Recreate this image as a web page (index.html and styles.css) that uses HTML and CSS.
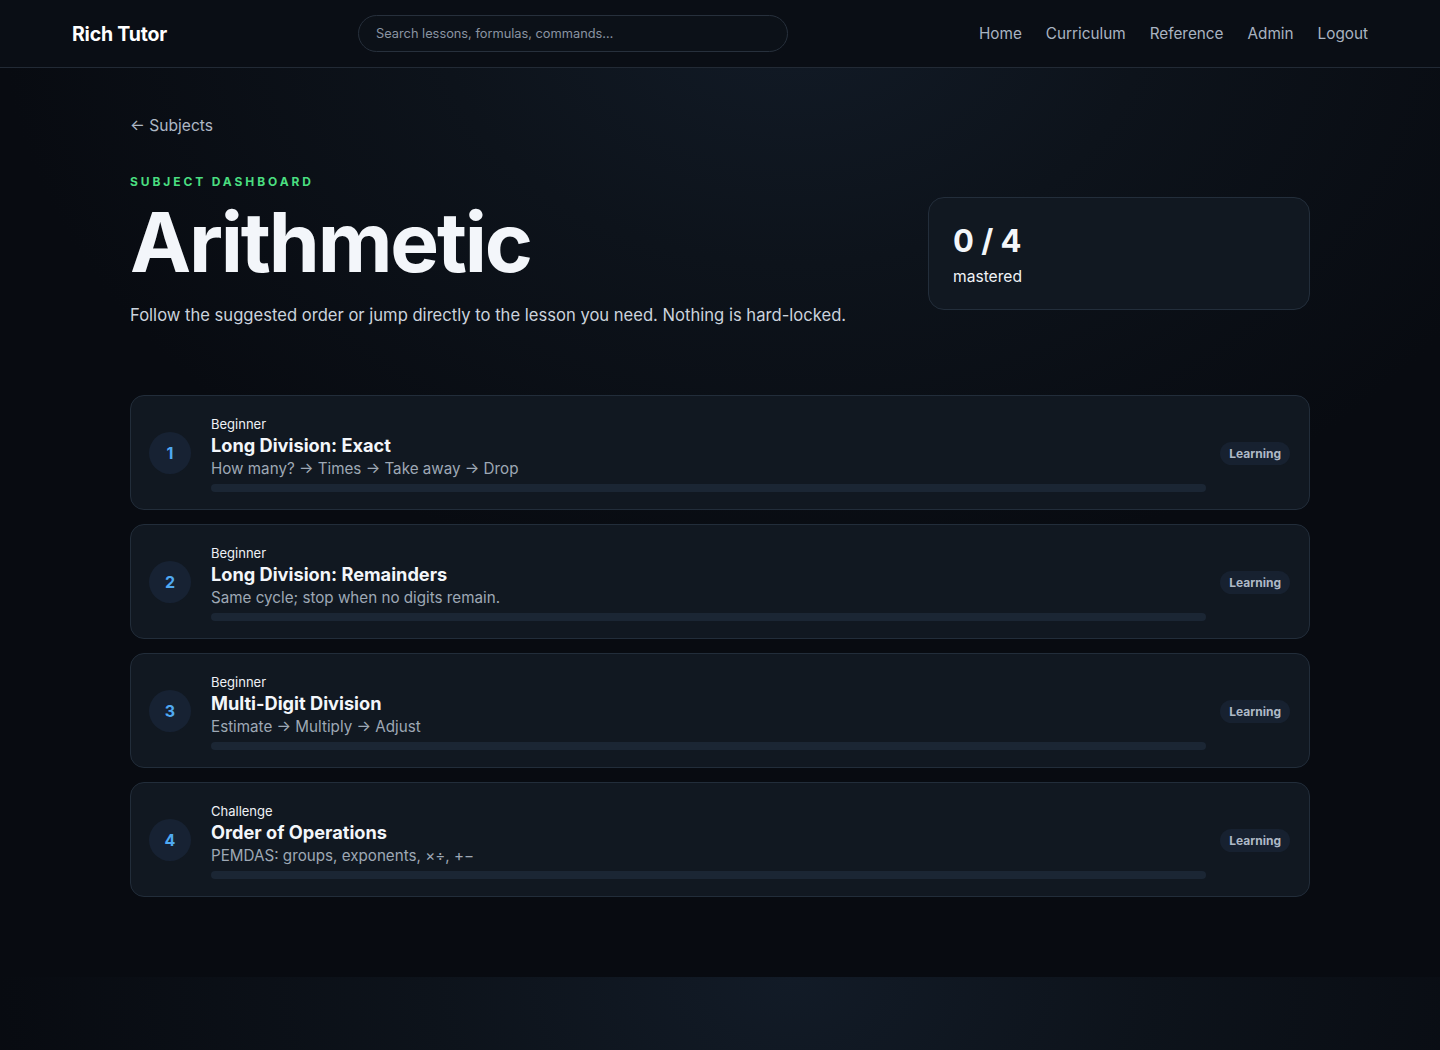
FILE: index.html
```html
<!DOCTYPE html>
<html lang="en">
<head>
    <meta charset="UTF-8">
    <meta name="viewport" content="width=device-width, initial-scale=1.0">
    <title>Arithmetic - Rich Tutor</title>
    <link rel="stylesheet" href="styles.css">
</head>
<body>
    <header class="topbar">
        <a class="brand" href="#">Rich Tutor</a>
        <input class="search" type="text" placeholder="Search lessons, formulas, commands…">
        <nav class="nav">
            <a href="#">Home</a>
            <a href="#">Curriculum</a>
            <a href="#">Reference</a>
            <a href="#">Admin</a>
            <a href="#">Logout</a>
        </nav>
    </header>

    <main class="page">
        <a class="back" href="#">&larr; Subjects</a>

        <section class="hero">
            <div class="hero-text">
                <div class="eyebrow">Subject Dashboard</div>
                <h1>Arithmetic</h1>
                <p>Follow the suggested order or jump directly to the lesson you need. Nothing is hard-locked.</p>
            </div>
            <div class="stat-card">
                <div class="stat-value">0 / 4</div>
                <div class="stat-label">mastered</div>
            </div>
        </section>

        <div class="lessons">
            <a class="lesson" href="#">
                <div class="lesson-num">1</div>
                <div class="lesson-body">
                    <div class="lesson-level">Beginner</div>
                    <div class="lesson-title">Long Division: Exact</div>
                    <div class="lesson-desc">How many? &rarr; Times &rarr; Take away &rarr; Drop</div>
                    <div class="progress"><div class="progress-fill" style="width: 0%"></div></div>
                </div>
                <span class="badge">Learning</span>
            </a>
            <a class="lesson" href="#">
                <div class="lesson-num">2</div>
                <div class="lesson-body">
                    <div class="lesson-level">Beginner</div>
                    <div class="lesson-title">Long Division: Remainders</div>
                    <div class="lesson-desc">Same cycle; stop when no digits remain.</div>
                    <div class="progress"><div class="progress-fill" style="width: 0%"></div></div>
                </div>
                <span class="badge">Learning</span>
            </a>
            <a class="lesson" href="#">
                <div class="lesson-num">3</div>
                <div class="lesson-body">
                    <div class="lesson-level">Beginner</div>
                    <div class="lesson-title">Multi-Digit Division</div>
                    <div class="lesson-desc">Estimate &rarr; Multiply &rarr; Adjust</div>
                    <div class="progress"><div class="progress-fill" style="width: 0%"></div></div>
                </div>
                <span class="badge">Learning</span>
            </a>
            <a class="lesson" href="#">
                <div class="lesson-num">4</div>
                <div class="lesson-body">
                    <div class="lesson-level">Challenge</div>
                    <div class="lesson-title">Order of Operations</div>
                    <div class="lesson-desc">PEMDAS: groups, exponents, &times;&divide;, +&minus;</div>
                    <div class="progress"><div class="progress-fill" style="width: 0%"></div></div>
                </div>
                <span class="badge">Learning</span>
            </a>
        </div>
    </main>
</body>
</html>
```

FILE: styles.css
```css
* {
    box-sizing: border-box;
}
html {
    background-color: #080b11;
}
body {
    margin: 0;
    font-family: Inter, "Noto Sans", sans-serif;
    color: #f3f5f8;
    background-color: #080b11;
    background-image: radial-gradient(ellipse 55% 60% at 55% 0%, #121b27 0%, #0d131b 45%, #080b11 100%);
    background-size: 100% 977px;
    min-height: 1050px;
}
a {
    color: inherit;
    text-decoration: none;
}

.topbar {
    display: flex;
    align-items: center;
    height: 68px;
    padding: 0 72px;
    border-bottom: 1px solid #222a35;
    background-color: #0a0e15;
}
.brand {
    font-size: 19.5px;
    font-weight: 700;
    letter-spacing: -0.2px;
    color: #ffffff;
    width: 286px;
}
.search {
    width: 430px;
    height: 37px;
    padding: 0 17px;
    border: 1px solid #27303c;
    border-radius: 999px;
    background-color: #0c1118;
    color: #d0d6de;
    font-family: inherit;
    font-size: 12.8px;
    outline: none;
}
.search::placeholder {
    color: #8a94a2;
}
.nav {
    display: flex;
    gap: 24px;
    margin-left: auto;
}
.nav a {
    font-size: 15.3px;
    color: #a9b3c1;
}

.page {
    width: 1180px;
    margin: 0 auto;
    padding-top: 47px;
}
.back {
    display: inline-block;
    font-size: 15.6px;
    color: #aeb8c5;
}

.hero {
    display: flex;
    align-items: center;
    gap: 40px;
    margin-top: 39px;
}
.hero-text {
    flex: 1;
}
.eyebrow {
    font-size: 12px;
    font-weight: 700;
    letter-spacing: 2.9px;
    text-transform: uppercase;
    color: #4ade80;
}
.hero h1 {
    margin: 13px 0 0;
    font-size: 82px;
    font-weight: 700;
    line-height: 1;
    letter-spacing: -2.2px;
    color: #f3f6fa;
}
.hero p {
    margin: 21px 0 0;
    font-size: 16.6px;
    color: #cbd3dd;
}
.stat-card {
    width: 382px;
    height: 113px;
    padding: 24px 24px;
    border: 1px solid #232e3b;
    border-radius: 16px;
    background-color: #111821;
    margin-top: 8px;
}
.stat-value {
    font-size: 31px;
    font-weight: 700;
    line-height: 38px;
    color: #f3f6fa;
}
.stat-label {
    margin-top: 7px;
    font-size: 15.6px;
    color: #f0f3f7;
}

.lessons {
    display: flex;
    flex-direction: column;
    gap: 14px;
    margin-top: 70px;
}
.lesson {
    display: flex;
    align-items: center;
    gap: 20px;
    min-height: 115px;
    padding: 18px 19px 17px 18px;
    border: 1px solid #222d3a;
    border-radius: 14px;
    background-color: #111821;
}
.lesson-num {
    flex: none;
    width: 42px;
    height: 42px;
    border-radius: 50%;
    background-color: #172233;
    color: #4fa9f2;
    font-size: 16px;
    font-weight: 700;
    display: flex;
    align-items: center;
    justify-content: center;
}
.lesson-body {
    flex: 1;
}
.lesson-level {
    font-size: 13px;
    line-height: 20px;
    color: #eef1f5;
}
.lesson-title {
    font-size: 18.2px;
    font-weight: 700;
    line-height: 22px;
    color: #f3f6fa;
}
.lesson-desc {
    margin-top: 2px;
    font-size: 15.2px;
    line-height: 22px;
    color: #9ea8b5;
}
.progress {
    margin-top: 4px;
    height: 8px;
    border-radius: 4px;
    background-color: #1b2634;
    overflow: hidden;
}
.progress-fill {
    height: 100%;
    background-color: #4ade80;
}
.badge {
    flex: none;
    margin-left: -6px;
    padding: 4px 9px;
    border-radius: 999px;
    background-color: #172130;
    color: #aeb9c6;
    font-size: 12px;
    font-weight: 700;
}
```
